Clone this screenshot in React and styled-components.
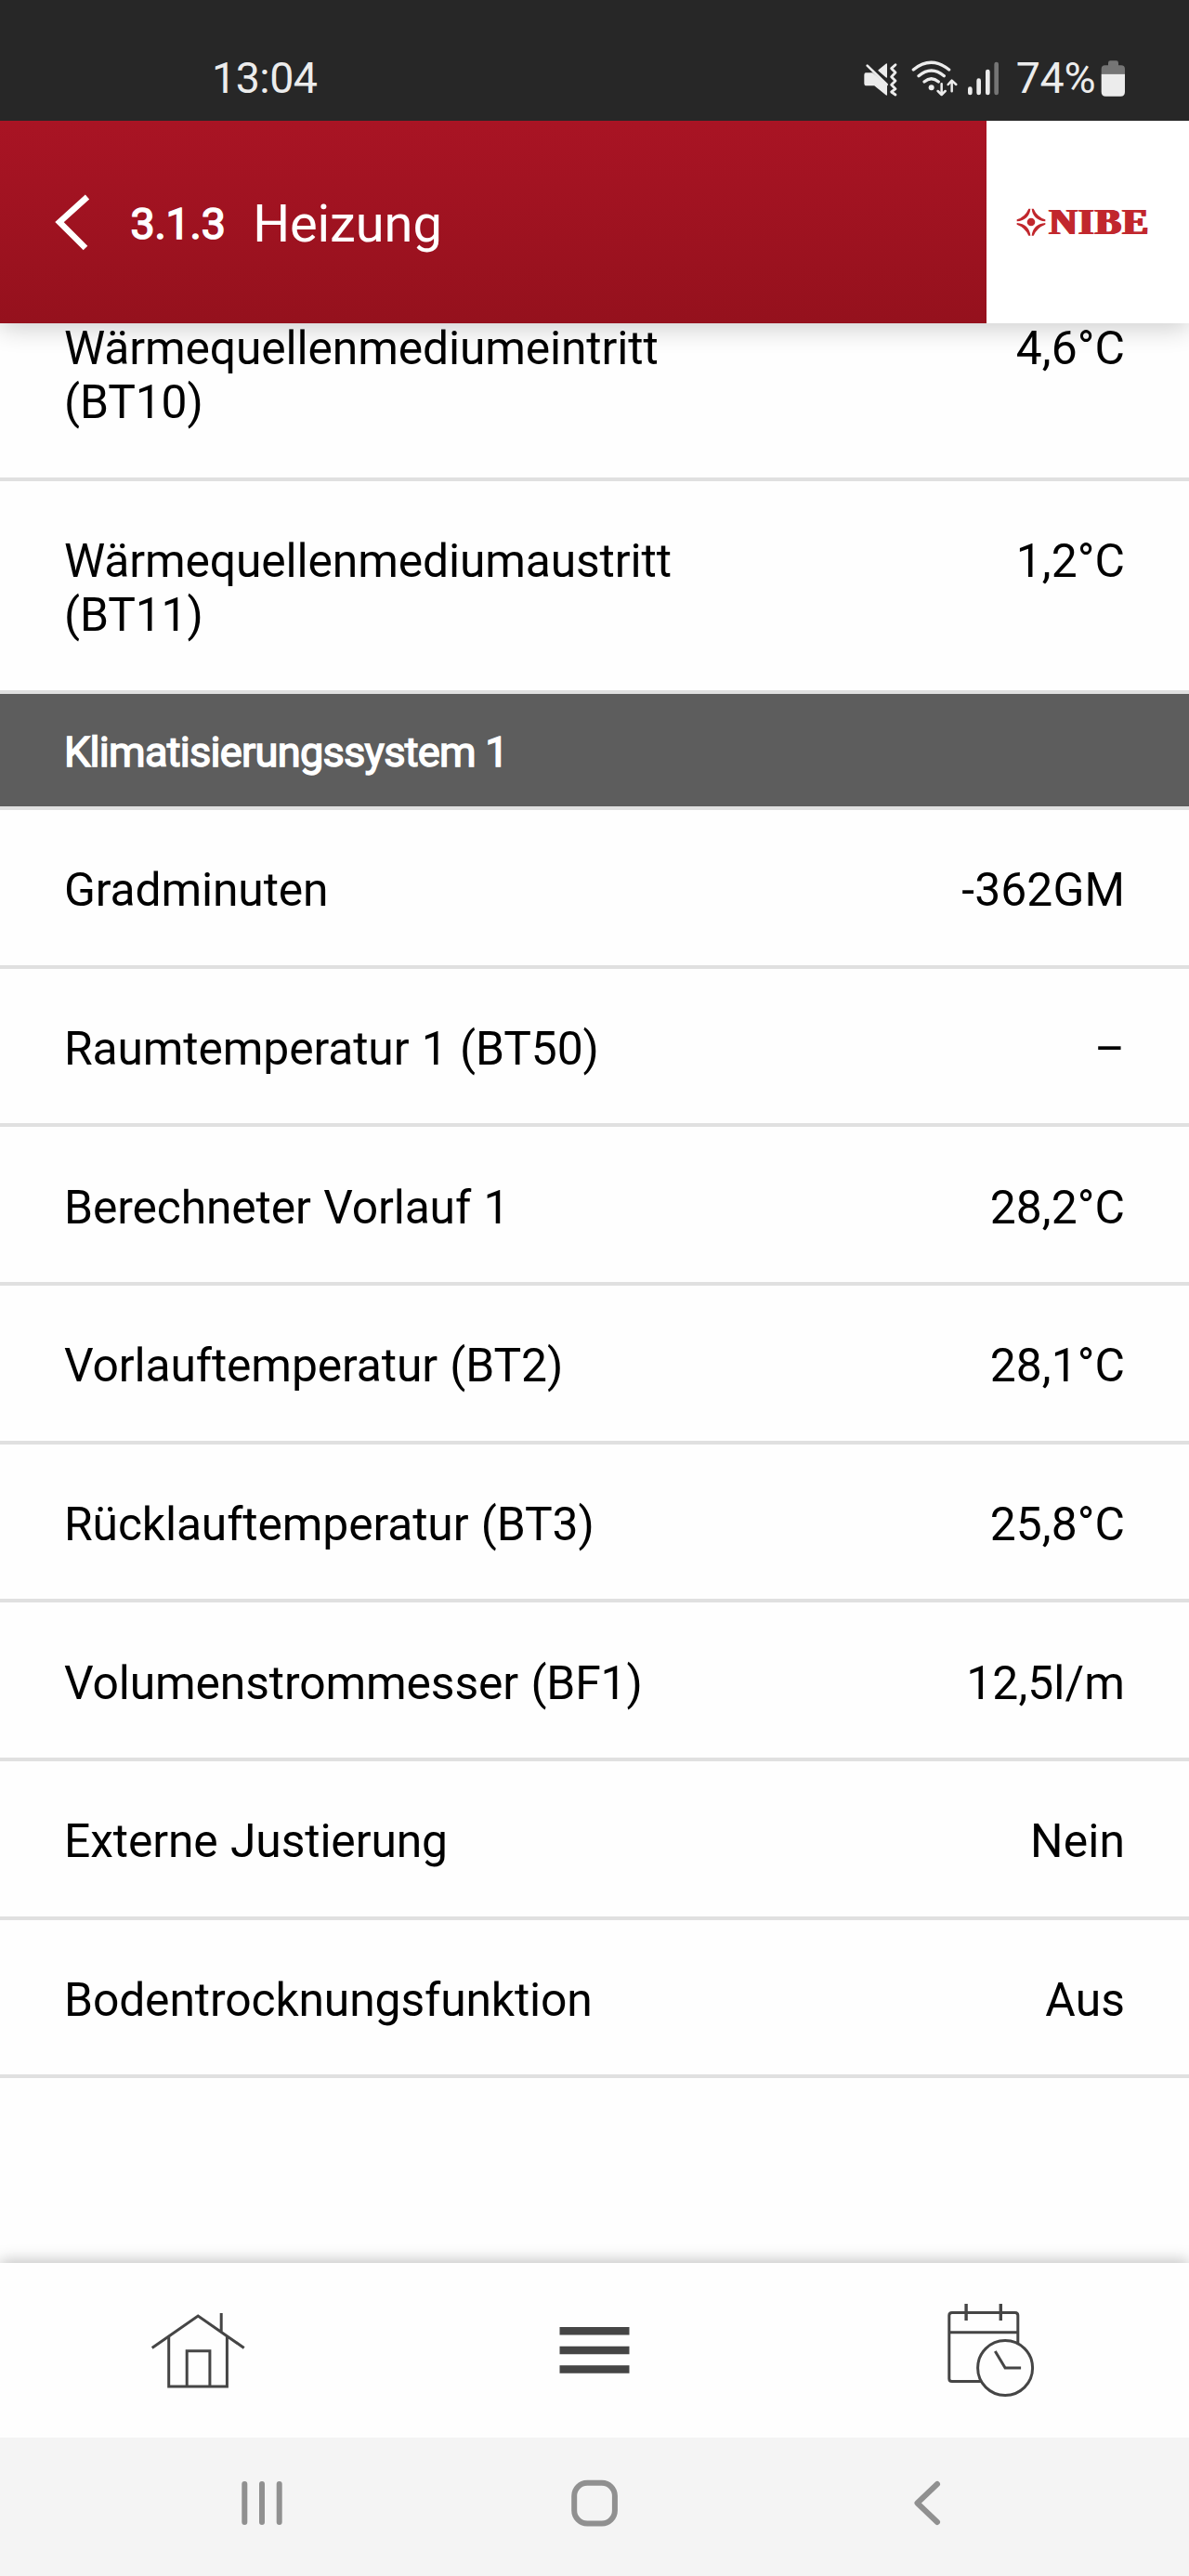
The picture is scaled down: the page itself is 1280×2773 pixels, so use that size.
import React from 'react';
import styled, { createGlobalStyle } from 'styled-components';

const GlobalStyle = createGlobalStyle`
    body {
        margin: 0;
        background: #fefefe;
        font-family: Roboto, 'Liberation Sans', sans-serif;
    }
`;

const Screen = styled.div`
    display: flex;
    flex-direction: column;
    width: 1280px;
    height: 2773px;
    overflow: hidden;
    background: #fefefe;
`;

const StatusBar = styled.div`
    position: relative;
    z-index: 2;
    display: flex;
    align-items: center;
    flex: none;
    box-sizing: border-box;
    height: 130px;
    padding: 40px 68px 0 228px;
    background: #272727;
    color: #ececec;
    font-size: 46.6px;
`;

const Clock = styled.span`
    flex: 1;
    margin-bottom: 2px;
    letter-spacing: -0.5px;
`;

const StatusIcon = styled.svg`
    display: block;
    width: ${({ $width }) => $width}px;
    height: 39.33px;
    margin-right: ${({ $gap }) => $gap || 0}px;
    fill: none;
    stroke: #ececec;
    stroke-linecap: round;
    stroke-linejoin: round;
`;

const Battery = styled.span`
    margin: 0 6px 2px 0;
    letter-spacing: -0.3px;
`;

const Header = styled.header`
    position: relative;
    z-index: 1;
    display: flex;
    flex: none;
    height: 218px;
    box-shadow: 0 5px 26px rgba(0, 0, 0, 0.2);
`;

const TitleBar = styled.div`
    display: flex;
    align-items: center;
    flex: 1;
    padding-left: 58px;
    background: linear-gradient(#a91424, #95111d);
    color: #fff;
`;

const BackIcon = styled.svg`
    width: 40px;
    height: 62px;
    margin-right: 42.5px;
`;

const MenuNumber = styled.span`
    margin: 4px 29.5px 0 0;
    font-size: 46.6px;
    letter-spacing: -0.2px;
    -webkit-text-stroke: 1.6px currentColor;
`;

const Title = styled.h1`
    margin: 3px 0 0;
    font-size: 56px;
    font-weight: 400;
    letter-spacing: -0.1px;
`;

const Brand = styled.div`
    display: flex;
    align-items: center;
    box-sizing: border-box;
    width: 218px;
    padding-left: 32px;
    background: #fff;
    color: #c1272d;
`;

const BrandMark = styled.svg`
    flex: none;
    width: 32px;
    height: 32px;
    margin-right: 2px;
    fill: currentColor;
`;

/* The shadows widen the stems and leave the hairlines thin. */
const BrandName = styled.span`
    font-family: 'Liberation Serif', serif;
    font-size: 39px;
    font-weight: 700;
    line-height: 32px;
    letter-spacing: 1.7px;
    transform: scaleX(1.06);
    transform-origin: left center;
    text-shadow: 1px 0, 2px 0, 3px 0;
`;

const Content = styled.main`
    flex: 1;
    min-height: 0;
`;

/* The list is scrolled a little, so its first row starts under the header. */
const List = styled.div`
    margin-top: -59.7px;
`;

const Row = styled.div`
    display: flex;
    justify-content: space-between;
    box-sizing: border-box;
    height: ${({ $tall }) => ($tall ? 229.3 : 170.67)}px;
    padding: 57.4px 69px 0;
    border-bottom: 4px solid #e0e0e0;
    color: #000;
    font-size: 49.8px;
    line-height: 58px;
`;

const Label = styled.div`
    width: 700px;
    letter-spacing: -0.13px;
    word-spacing: 1.2px;
`;

const Value = styled.div`
    text-align: right;
    white-space: nowrap;
    letter-spacing: 0.1px;
`;

const SectionTitle = styled.h2`
    box-sizing: border-box;
    height: 125.2px;
    margin: 0;
    padding: 0 69px;
    border-bottom: 4px solid #e0e0e0;
    background: #5d5d5d;
    color: #fff;
    font-size: 45.2px;
    font-weight: 400;
    line-height: 125px;
    letter-spacing: -0.76px;
    -webkit-text-stroke: 1.5px currentColor;
`;

const TabBar = styled.nav`
    position: relative;
    display: grid;
    grid-template-columns: repeat(3, 1fr);
    justify-items: center;
    flex: none;
    height: 187.5px;
    background: #fefefe;
    box-shadow: 0 -2px 16px rgba(0, 0, 0, 0.26);
`;

const TabIcon = styled.svg`
    width: 120px;
    height: 120px;
    margin-top: 34px;
    fill: none;
    stroke: #454545;
    stroke-width: 3;
`;

const SystemBar = styled.div`
    position: relative;
    display: flex;
    justify-content: space-between;
    flex: none;
    box-sizing: border-box;
    height: 149.5px;
    padding: 40.5px 251px 0 252px;
    background: #f4f4f4;
`;

const SystemIcon = styled.svg`
    width: 60px;
    height: 60px;
    fill: none;
    stroke: #909090;
    stroke-width: 6;
    stroke-linecap: round;
    stroke-linejoin: round;
`;

const sourceRows = [
    { label: 'Wärmequellenmediumeintritt (BT10)', value: '4,6°C' },
    { label: 'Wärmequellenmediumaustritt (BT11)', value: '1,2°C' },
];

const climateRows = [
    { label: 'Gradminuten', value: '-362GM' },
    { label: 'Raumtemperatur 1 (BT50)', value: '–' },
    { label: 'Berechneter Vorlauf 1', value: '28,2°C' },
    { label: 'Vorlauftemperatur (BT2)', value: '28,1°C' },
    { label: 'Rücklauftemperatur (BT3)', value: '25,8°C' },
    { label: 'Volumenstrommesser (BF1)', value: '12,5l/m' },
    { label: 'Externe Justierung', value: 'Nein' },
    { label: 'Bodentrocknungsfunktion', value: 'Aus' },
];

const MuteIcon = () => (
    <StatusIcon $width={38.33} $gap={13.7} viewBox="90 76 115 118">
        <path d="M99 118h22l45 38v31l-38-31H99q-3-1-3-5v-28q0-4 3-5z" fill="#ececec" strokeWidth="4" />
        <path d="M166 88v42l-25-22z" fill="#ececec" strokeWidth="4" />
        <path d="M104 93l63 61" strokeWidth="8" />
        <path d="M195 90l-13 12 13 13-13 14 13 13-13 13 13 13-13 10 13 9" strokeWidth="8.5" />
    </StatusIcon>
);

const WifiIcon = () => (
    <StatusIcon $width={50.67} $gap={9.3} viewBox="246 76 152 118">
        <path d="M253 106q57-46 115 0" strokeWidth="10" />
        <path d="M270 126q41-34 82 0" strokeWidth="10" />
        <path d="M288 145q23-19 46 0" strokeWidth="10" />
        <circle cx="311" cy="164" r="9" fill="#ececec" stroke="none" />
        <path d="M344 152v34M332 175l12 12 12-12" strokeWidth="7.5" />
        <path d="M377 176v-34M365 154l12-13 14 13" strokeWidth="7.5" />
    </StatusIcon>
);

const SignalIcon = () => (
    <StatusIcon $width={35.33} $gap={17} viewBox="426 76 106 118">
        <path d="M436 168v13M464 141v40M493 112v69" strokeWidth="14" />
        <path d="M521 88v93" stroke="#757575" strokeWidth="14" />
    </StatusIcon>
);

const BatteryIcon = () => (
    <StatusIcon $width={26.67} viewBox="856 76 80 118">
        <path d="M858 120v-16q0-12 12-12h10v-8q0-7 7-7h19q7 0 7 7v8h9q12 0 12 12v16z" fill="#757575" stroke="none" />
        <path d="M858 120h76v58q0 14-14 14h-48q-14 0-14-14z" fill="#ececec" stroke="none" />
    </StatusIcon>
);

const DataRow = ({ label, value, tall }) => (
    <Row $tall={tall}>
        <Label>{label}</Label>
        <Value>{value}</Value>
    </Row>
);

const App = () => {
    return (
        <>
            <GlobalStyle />
            <Screen>
                <StatusBar>
                    <Clock>13:04</Clock>
                    <MuteIcon />
                    <WifiIcon />
                    <SignalIcon />
                    <Battery>74%</Battery>
                    <BatteryIcon />
                </StatusBar>

                <Header>
                    <TitleBar>
                        <BackIcon viewBox="0 0 40 62" fill="none" stroke="#fff" strokeWidth="6.5">
                            <path d="M36 4L6 31l28 28" />
                        </BackIcon>
                        <MenuNumber>3.1.3</MenuNumber>
                        <Title>Heizung</Title>
                    </TitleBar>
                    <Brand>
                        <BrandMark viewBox="0 0 96 96">
                            <circle cx="48" cy="48" r="13" />
                            <path d="M40 5Q29 31 2 40v6Q42 42 46 5z" />
                            <path d="M56 5Q67 31 94 40v6Q54 42 50 5z" />
                            <path d="M40 92Q29 66 2 56v-5Q42 55 46 92z" />
                            <path d="M56 92Q67 66 94 56v-5Q54 55 50 92z" />
                        </BrandMark>
                        <BrandName>NIBE</BrandName>
                    </Brand>
                </Header>

                <Content>
                    <List>
                        {sourceRows.map((row) => (
                            <DataRow key={row.label} tall {...row} />
                        ))}
                        <SectionTitle>Klimatisierungssystem 1</SectionTitle>
                        {climateRows.map((row) => (
                            <DataRow key={row.label} {...row} />
                        ))}
                    </List>
                </Content>

                <TabBar>
                    <TabIcon viewBox="153.3 2470 120 120">
                        <path d="M164 2527.5l49.5-34.5 49.5 34.5M238.5 2490v20" />
                        <path d="M182 2515v54h62.7v-54M201.5 2569v-38.2h24.7V2569" />
                    </TabIcon>
                    <TabIcon viewBox="580 2470 120 120">
                        <path d="M602.5 2509.2h75M602.5 2530h75M602.5 2550.5h75" strokeWidth="8.6" />
                    </TabIcon>
                    <TabIcon viewBox="1007.2 2470 120 120">
                        <path d="M1057 2563.5h-32q-3 0-3-3v-68q0-3 3-3h68q3 0 3 3v31M1022 2510.7h74" />
                        <path d="M1040.3 2480v18M1077.5 2480v18" strokeWidth="3.4" />
                        <circle cx="1082.3" cy="2549" r="29.5" />
                        <path d="M1071.5 2531l10.8 18h17" />
                    </TabIcon>
                </TabBar>

                <SystemBar>
                    <SystemIcon viewBox="0 0 60 60">
                        <path d="M11.3 10v41M30 10v41M48.7 10v41" />
                    </SystemIcon>
                    <SystemIcon viewBox="0 0 60 60">
                        <rect x="7.2" y="8.7" width="43.700" height="43.700" rx="14" />
                    </SystemIcon>
                    <SystemIcon viewBox="0 0 60 60">
                        <path d="M40 10L18.500 30.500 40 51" />
                    </SystemIcon>
                </SystemBar>
            </Screen>
        </>
    );
};

export default App;
